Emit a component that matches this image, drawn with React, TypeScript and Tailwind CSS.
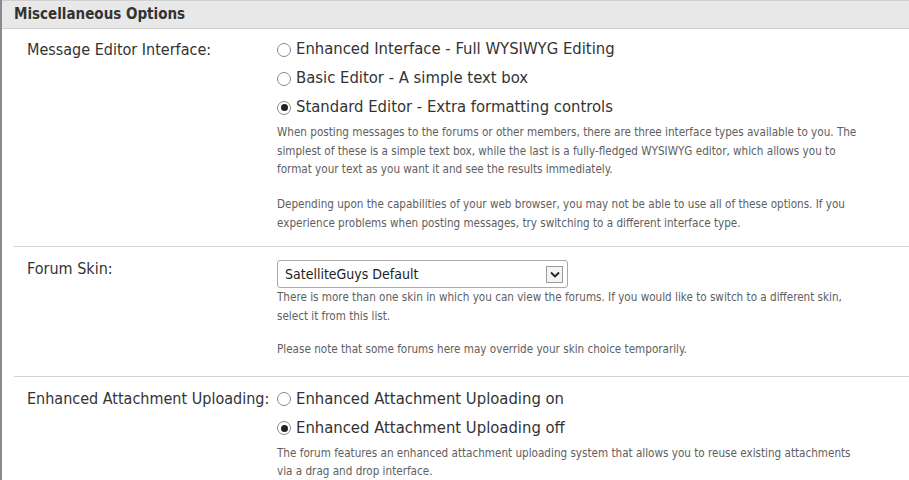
import React from "react";

const font = { fontFamily: '"DejaVu Sans Condensed", "DejaVu Sans", sans-serif' };

const Radio = ({ checked, label }: { checked?: boolean; label: string }) => (
  <label className="flex items-center h-[29px] text-[16.5px] text-[#333] whitespace-nowrap">
    <span className="w-[14px] h-[14px] rounded-full border border-[#8a8a8a] bg-white flex items-center justify-center mr-[5px]">
      {checked && <span className="w-[7px] h-[7px] rounded-full bg-[#222]" />}
    </span>
    {label}
  </label>
);

const Row = ({
  label,
  labelTop,
  children,
  last,
}: {
  label: string;
  labelTop: string;
  children: React.ReactNode;
  last?: boolean;
}) => (
  <div className={last ? "flex" : "flex border-b border-[#d4d4d4]"}>
    <div className={`w-[263px] shrink-0 pl-[13px] ${labelTop}`}>
      <div className="h-[29px] flex items-center text-[16px] text-[#333] whitespace-nowrap">{label}</div>
    </div>
    <div className="flex-1">{children}</div>
  </div>
);

const Desc = ({ children }: { children: React.ReactNode }) => (
  <div className="text-[11.6px] leading-[18.5px] text-[#606060] max-w-[588px]">{children}</div>
);

export default function App() {
  return (
    <div className="w-[909px] h-[480px] bg-white overflow-hidden border-l-2 border-[#8a8a8a]" style={font}>
      <div className="h-[29px] bg-[#e8e8e8] border-t border-b border-[#d0d0d0] flex items-center pl-[12px] text-[15px] font-bold text-[#333]">
        Miscellaneous Options
      </div>
      <div className="ml-[12px]">
        <Row label="Message Editor Interface:" labelTop="pt-[6px]">
          <div className="pt-[6px] pb-[14px]">
            <Radio label="Enhanced Interface - Full WYSIWYG Editing" />
            <Radio label="Basic Editor - A simple text box" />
            <Radio checked label="Standard Editor - Extra formatting controls" />
            <div className="mt-[1px]">
              <Desc>
                When posting messages to the forums or other members, there are three interface types available to you. The simplest of these is a simple text box, while the last is a fully-fledged WYSIWYG editor, which allows you to format your text as you want it and see the results immediately.
              </Desc>
              <div className="h-[16.5px]" />
              <Desc>
                Depending upon the capabilities of your web browser, you may not be able to use all of these options. If you experience problems when posting messages, try switching to a different interface type.
              </Desc>
            </div>
          </div>
        </Row>
        <Row label="Forum Skin:" labelTop="pt-[7px]">
          <div className="pt-[13px] pb-[17px]">
            <div className="w-[291px] h-[28px] border border-[#a9a9a9] rounded-[3px] flex items-center justify-between pl-[7px] pr-[4px] text-[14px] text-[#222]">
              SatelliteGuys Default
              <span className="w-[17px] h-[17px] border border-[#9a9a9a] bg-[#f4f4f4] flex items-center justify-center">
                <svg width="10" height="7" viewBox="0 0 10 7">
                  <path d="M1 1.5 L5 5.5 L9 1.5" fill="none" stroke="#222" strokeWidth="1.8" />
                </svg>
              </span>
            </div>
            <Desc>
              There is more than one skin in which you can view the forums. If you would like to switch to a different skin, select it from this list.
            </Desc>
            <div className="h-[15px]" />
            <Desc>Please note that some forums here may override your skin choice temporarily.</Desc>
          </div>
        </Row>
        <Row label="Enhanced Attachment Uploading:" labelTop="pt-[8px]" last>
          <div className="pt-[8px]">
            <Radio label="Enhanced Attachment Uploading on" />
            <Radio checked label="Enhanced Attachment Uploading off" />
            <div className="mt-[1px]">
              <Desc>
                The forum features an enhanced attachment uploading system that allows you to reuse existing attachments via a drag and drop interface.
              </Desc>
            </div>
          </div>
        </Row>
      </div>
    </div>
  );
}
